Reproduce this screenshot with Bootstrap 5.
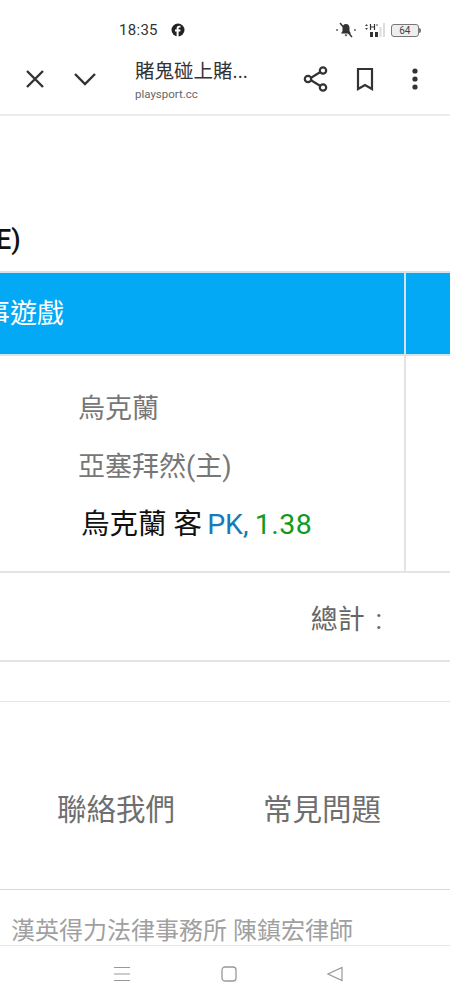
<!DOCTYPE html>
<html lang="zh-Hant">
<head>
    <meta charset="UTF-8">
    <meta name="viewport" content="width=device-width, initial-scale=1.0">
    <title>賭鬼碰上賭...</title>
    <link href="https://cdn.jsdelivr.net/npm/bootstrap@5.3.0/dist/css/bootstrap.min.css" rel="stylesheet">
    <style>
        html, body { height: 1000px; overflow: hidden; }
        body { background: #fff; font-family: Roboto, "Noto Sans CJK TC", sans-serif; width: 450px; }
        .status-row { height: 52px; padding-top: 8px; }
        .status-time { font-size: 15px; line-height: 20px; color: #333; margin-left: 119px; letter-spacing: .3px; }
        .status-fb { margin-left: 13px; }
        .status-icons { margin-left: 150px; gap: 6px; }
        .batt { position: relative; width: 28px; height: 13px; border: 1px solid #777; border-radius: 3px; font-size: 10px; line-height: 11px; text-align: center; color: #444; background: #eee; }
        .batt::after { content: ""; position: absolute; right: -3px; top: 3px; width: 2px; height: 5px; background: #777; border-radius: 0 2px 2px 0; }
        .tool-row { height: 64px; padding-bottom: 8px; border-bottom: 2px solid #ececec; }
        .tool-x { margin-left: 24px; }
        .tool-chev { margin-left: 27px; }
        .tool-title { margin-left: 38px; width: 168px; padding-top: 3px; }
        .tool-name { font-size: 19.5px; line-height: 26px; color: #333; }
        .tool-url { font-size: 11.5px; line-height: 16px; color: #666; margin-top: 1px; }
        .tool-mark { margin-left: 27px; }
        .tool-more { margin-left: 38px; }
        .page-head { height: 155px; }
        .page-title { font-size: 27px; font-weight: 500; line-height: 34px; margin: 0 0 14px -4px; color: #111; }
        .tbl-head { height: 85px; background: #03a9f4; border-top: 2px solid #d5e3ea; border-bottom: 2px solid #d5e3ea; color: #fff; font-size: 27px; }
        .tbl-head-a { flex: none; width: 450px; margin-left: -44px; border-right: 2px solid #d5e3ea; padding-top: 2px; }
        .tbl-body { height: 217px; border-bottom: 2px solid #e4e4e4; }
        .tbl-cell { width: 406px; flex: none; border-right: 2px solid #e4e4e4; padding: 33px 0 0 78px; }
        .team-line { font-size: 27px; line-height: 40px; margin-bottom: 18px; color: #777; white-space: nowrap; }
        .team-pick { font-size: 28.5px; color: #111; margin: 0 0 0 3px; }
        .pick-kind { color: #1a7ab8; margin-left: -2px; }
        .pick-odds { color: #119a1d; margin-left: -1px; letter-spacing: .5px; }
        .sum-row { height: 89px; border-bottom: 2px solid #e4e4e4; padding: 8px 68px 0 0; font-size: 27px; color: #666; word-spacing: 4px; }
        .gap-row { height: 40px; border-bottom: 1px solid #e4e4e4; }
        .link-row { height: 188px; border-bottom: 1px solid #d8d8d8; font-size: 29.5px; color: #6f6f6f; padding: 30px 69px 0 57px; }
        .law-row { height: 56px; overflow: hidden; padding: 24px 0 0 11px; font-size: 24px; line-height: 34px; color: #a0a0a0; white-space: nowrap; border-bottom: 1px solid #e6e6e6; }
        .nav-row { height: 55px; padding-left: 113px; gap: 90px; }
    </style>
</head>
<body>
    <div class="d-flex align-items-center status-row">
        <span class="status-time">18:35</span>
        <svg class="status-fb" width="14" height="14" viewBox="0 0 14 14"><circle cx="7" cy="7" r="6.5" fill="#222"/><path d="M7.6 14V8.6h1.7l.3-2H7.6V5.5c0-.6.3-1 1-1h.9V2.8c-.5-.1-1-.1-1.400-.1-1.600 0-2.500 1-2.500 2.500v1.400H4v2h1.600V14z" fill="#fff"/></svg>
        <div class="d-flex align-items-center status-icons">
            <svg width="22" height="16" viewBox="0 0 22 16"><path d="M11 2c-2.500 0-3.500 2-3.500 4v3L6 11.500h10L14.500 9V6c0-2-1-4-3.500-4zM9.500 12.500h3L11 14.500z" fill="#333"/><path d="M5 1l12 14" stroke="#333" stroke-width="1.500"/><path d="M1 8h2M19 8h2" stroke="#666" stroke-width="1.500"/></svg>
            <svg width="22" height="16" viewBox="0 0 22 16"><path d="M2 4l1.500-2L5 4zM2 6l1.500 2L5 6z" fill="#444"/><path d="M7.500 2v6M11.500 2v6M7.500 5h4" stroke="#333" stroke-width="1.200" fill="none"/><path d="M13 3h2" stroke="#555"/><rect x="7" y="10" width="3" height="5" fill="#333"/><rect x="12" y="10" width="3" height="5" fill="#333"/><rect x="16.500" y="5" width="2" height="10" fill="#ddd"/><rect x="20" y="1" width="2" height="14" fill="#ddd"/></svg>
            <div class="batt">64</div>
        </div>
    </div>

    <div class="d-flex align-items-center tool-row">
        <svg class="tool-x" width="22" height="22" viewBox="0 0 22 22"><path d="M3 3l16 16M19 3L3 19" stroke="#333" stroke-width="2.400" fill="none"/></svg>
        <svg class="tool-chev" width="24" height="16" viewBox="0 0 24 16"><path d="M2 3l10 10L22 3" stroke="#333" stroke-width="2.400" fill="none"/></svg>
        <div class="tool-title">
            <div class="tool-name">賭鬼碰上賭...</div>
            <div class="tool-url">playsport.cc</div>
        </div>
        <svg width="26" height="28" viewBox="0 0 26 28"><path d="M19 6L6 14l13 8" stroke="#333" stroke-width="2.200" fill="none"/><circle cx="20" cy="5.500" r="3.200" fill="#fff" stroke="#333" stroke-width="2.200"/><circle cx="5" cy="14" r="3.200" fill="#fff" stroke="#333" stroke-width="2.200"/><circle cx="20" cy="22.500" r="3.200" fill="#fff" stroke="#333" stroke-width="2.200"/></svg>
        <svg class="tool-mark" width="18" height="24" viewBox="0 0 18 24"><path d="M2 2h14v20l-7-4-7 4z" stroke="#333" stroke-width="2.200" fill="none"/></svg>
        <svg class="tool-more" width="6" height="24" viewBox="0 0 6 24"><circle cx="3" cy="4" r="2.600" fill="#333"/><circle cx="3" cy="12" r="2.600" fill="#333"/><circle cx="3" cy="20" r="2.600" fill="#333"/></svg>
    </div>

    <div class="d-flex align-items-end page-head">
        <h1 class="page-title">E)</h1>
    </div>

    <div class="d-flex tbl-head">
        <div class="d-flex align-items-center tbl-head-a">賽事遊戲</div>
    </div>
    <div class="d-flex tbl-body">
        <div class="tbl-cell">
            <p class="team-line">烏克蘭</p>
            <p class="team-line">亞塞拜然(主)</p>
            <p class="team-line team-pick">烏克蘭 客 <span class="pick-kind">PK,</span> <span class="pick-odds">1.38</span></p>
        </div>
    </div>
    <div class="d-flex align-items-center justify-content-end sum-row">總計 :</div>
    <div class="gap-row"></div>
    <div class="d-flex align-items-center justify-content-between link-row">
        <span>聯絡我們</span>
        <span>常見問題</span>
    </div>
    <div class="law-row">漢英得力法律事務所 陳鎮宏律師</div>
    <div class="d-flex align-items-center nav-row">
        <svg width="18" height="16" viewBox="0 0 18 16"><path d="M1 1.500h16M1 8h16M1 14.500h16" stroke="#999" stroke-width="1.200"/></svg>
        <svg width="16" height="16" viewBox="0 0 16 16"><rect x="1" y="1" width="14" height="14" rx="3" fill="none" stroke="#999" stroke-width="1.300"/></svg>
        <svg width="16" height="16" viewBox="0 0 16 16"><path d="M15 1.500v13L1 8z" fill="none" stroke="#999" stroke-width="1.200"/></svg>
    </div>

    <script src="https://cdn.jsdelivr.net/npm/bootstrap@5.3.0/dist/js/bootstrap.bundle.min.js"></script>
</body>
</html>
